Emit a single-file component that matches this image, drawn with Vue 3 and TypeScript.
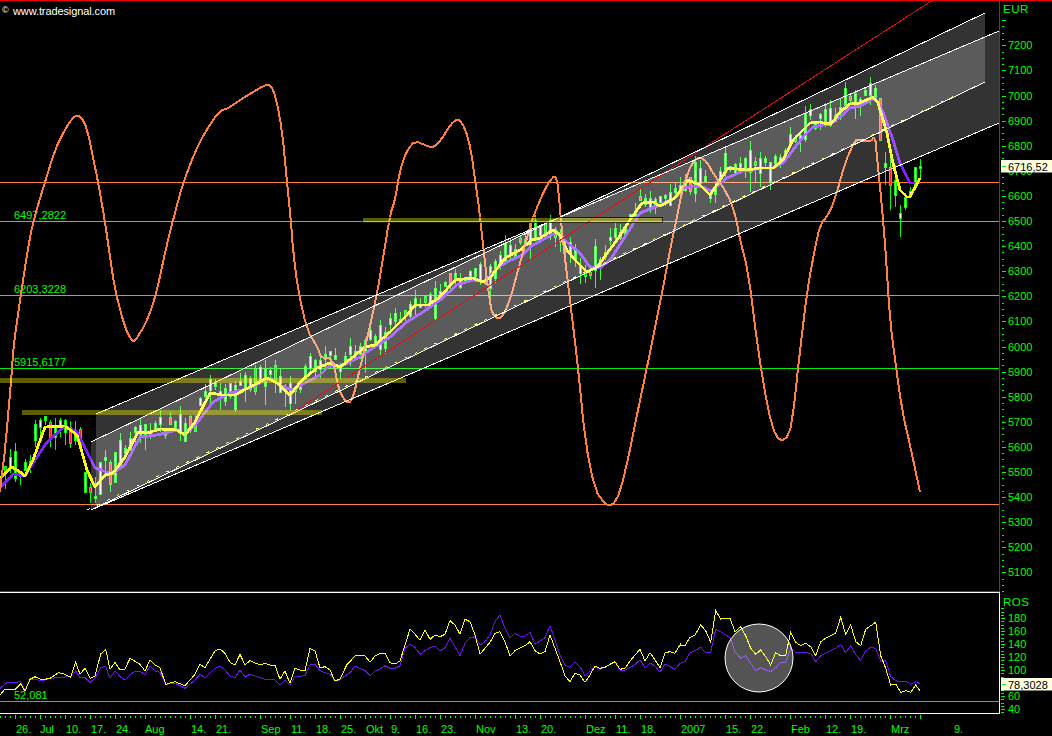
<script setup lang="ts">
type Pt = [number, number]

// points read off the chart, "x,y" pairs
const parse = (s: string): Pt[] =>
  s.trim().split(/\s+/).map(p => p.split(',').map(Number) as Pt)

// same, but measured in a 3x crop starting at x0,y0
const crop = (x0: number, y0: number, s: string): Pt[] =>
  parse(s).map(([a, b]) => [x0 + a / 3, y0 + b / 3] as Pt)

const line = (pts: Pt[]) => pts.map(([x, y]) => `${x.toFixed(1)},${y.toFixed(1)}`).join(' ')

// corner cutting, the oscillator is a smooth curve
const smooth = (pts: Pt[]): Pt[] => {
  const out: Pt[] = [pts[0]]
  for (let i = 0; i < pts.length - 1; i++) {
    const [ax, ay] = pts[i]
    const [bx, by] = pts[i + 1]
    out.push([ax * 0.75 + bx * 0.25, ay * 0.75 + by * 0.25], [ax * 0.25 + bx * 0.75, ay * 0.25 + by * 0.75])
  }
  out.push(pts[pts.length - 1])
  return out
}

const orangePts = parse(`0,492 2,473 5,450 12,370 13,350 20,300 28,248 33,222 45,182 55,150 63,133 73,117 80,115 87,128
  95,167 98,182 105,222 109,250 115,290 125,328 132,341 135,341 145,325 152,307 157,290 166,248 173,220 183,183 195,152
  205,132 220,110 227,109 240,100 253,92 265,85 271,85 276,98 282,130 287,182 291,222 293,250 298,290 307,330 318,348
  321,358 332,358 337,380 340,393 348,404 353,398 360,368 373,313 380,277 390,215 395,200 400,170 407,150 415,141
  425,145 433,148 441,140 450,125 458,118 465,128 471,150 475,180 478,200 480,217 490,307 495,318 502,318 510,300
  520,263 532,220 540,200 548,183 555,175 558,185 562,233 570,300 578,367 585,440 595,490 605,504 612,506 620,493
  630,450 640,400 647,367 662,293 672,240 677,217 683,187 692,162 700,157 707,162 713,173 727,193 735,213 740,240
  748,270 758,350 768,410 776,438 785,441 792,425 800,350 808,285 815,248 820,225 830,212 837,192 845,163 855,140
  860,140 870,142 875,136 877,157 880,187 883,220 886,257 890,320 895,360 902,410 910,445 920,492`)

const yellowPts = parse(`0,478 12,467 20,472 25,476 33,460 45,427 65,426 77,435 87,470 95,487 105,475 113,473 125,457
  138,432 147,433 160,429 177,430 185,435 195,422 210,393 223,395 235,395 248,388 267,378 277,383 290,395 302,380
  317,368 330,363 340,367 353,357 365,347 375,345 390,332 407,315 415,305 428,305 440,297 455,280 473,278 483,282
  490,278 505,258 520,250 532,240 540,238 553,230 560,235 567,250 575,260 587,272 597,267 617,240 630,220 642,203
  653,202 660,206 675,198 688,180 700,185 710,195 718,183 728,168 747,170 760,168 773,168 783,160 793,140 800,133
  810,123 820,122 827,124 832,123 840,112 850,104 860,103 873,97 878,103 887,133 893,163 900,190 907,197 910,197 920,178`)

const purplePts = parse(`0,488 13,474 25,476 35,460 47,442 65,426 77,432 95,468 112,474 125,465 140,437 157,435 177,430
  185,435 197,423 213,402 230,393 250,388 270,378 280,385 292,390 307,382 320,375 330,365 340,367 360,357 373,348
  390,337 407,322 423,312 440,300 457,285 473,280 485,282 497,268 507,262 522,255 533,245 557,232 570,245 580,253
  590,267 600,268 610,260 623,240 640,213 660,205 675,198 685,188 693,186 703,187 711,191 727,178 745,170 750,171
  760,168 773,168 783,163 793,150 803,137 813,127 823,125 830,124 840,117 850,108 860,106 875,98 883,112 893,140
  900,163 910,183 920,183`)

const rosYellow = [
  ...crop(0, 585, `0,330 15,312 45,313 62,297 75,318 90,283 105,275 125,285 150,280 175,263 195,268 212,277 227,232 240,268
    255,250 270,280 285,273 302,207 317,193 330,253 345,232 360,255 375,252 390,220 420,238 435,258 450,225 465,240 480,248
    497,298 525,290 555,302 585,268 600,238 615,248 645,197 660,192 675,205 690,232 705,240 720,208 735,240 750,227 780,240
    795,235 810,240 825,240 840,283 855,258 870,295 885,250 900,255 915,258 930,190 945,198 960,248 975,245 990,255
    1005,288 1020,282`),
  ...crop(340, 585, `0,283 20,240 45,213 75,212 90,232 105,213 120,205 135,205 150,233 165,237 180,228 195,180 210,133 225,148
    240,165 255,135 270,163 285,150 300,155 315,148 330,107 345,120 360,148 375,103 390,110 405,150 420,207 435,190 450,172
    465,145 480,140 495,170 510,213 525,197 555,182 570,170 585,197 600,207 615,200 630,150 645,190 660,230 675,272 690,290
    705,265 720,270 735,292 750,270 765,243 780,250 795,247 810,238 825,230 840,253 855,250 870,228 900,193 915,228 930,203
    945,225 960,248 975,203 990,200 1005,205 1020,180`),
  ...crop(680, 585, `0,182 15,182 30,157 45,150 62,120 77,137 92,172 107,77 122,102 150,100 165,140 182,125 197,152 212,190
    227,208 242,195 257,215 272,240 287,203 302,212 317,210 332,142 347,172 362,182 377,175 392,185 407,212 422,170 437,160
    467,145 482,97 497,148 512,120 527,170 542,182 557,133 572,122 587,112 602,212 617,250 632,300 647,297 662,322 677,317
    692,322 707,300 720,318`),
]

const rosPurple = [
  ...crop(0, 585, `0,310 20,293 35,293 62,290 75,315 90,283 105,282 125,288 150,280 175,278 195,276 212,275 227,258 240,278
    255,278 270,292 285,280 302,248 317,243 330,280 345,257 360,275 375,285 390,270 405,258 420,258 435,270 450,243 465,258
    480,262 497,298 525,295 555,310 585,285 600,268 615,278 645,250 660,243 675,255 690,273 705,278 720,255 735,275 750,268
    780,278 795,283 825,285 840,300 855,285 870,300 885,275 915,272 930,240 945,238 960,257 975,263 990,268 1005,288
    1020,285`),
  ...crop(340, 585, `0,283 30,263 45,243 75,257 90,272 105,258 120,252 135,242 150,250 165,250 180,242 195,190 210,178 225,187
    240,208 255,197 270,188 285,183 300,198 315,188 330,160 345,185 360,212 375,175 390,158 405,155 420,180 435,170 450,150
    465,110 480,90 495,130 510,160 525,145 540,153 555,153 570,142 585,178 600,168 615,158 630,122 645,165 660,210 675,240
    690,247 705,232 720,245 735,272 750,258 765,245 780,253 795,247 810,238 825,232 840,255 855,255 870,248 885,238 900,225
    915,248 930,235 945,242 960,262 975,237 990,245 1005,253 1020,235`),
  ...crop(680, 585, `0,235 15,230 30,203 45,197 62,187 77,203 92,202 107,133 122,140 150,158 165,200 182,220 197,212 212,235
    227,257 242,248 257,255 272,260 287,248 302,232 317,232 332,190 347,203 377,203 392,205 407,230 422,212 437,205 467,190
    482,178 497,203 512,183 527,208 542,227 557,197 572,187 587,190 602,228 617,227 632,275 647,287 662,290 677,288 692,298
    707,290 720,296`),
]

const yellowAt = (x: number) => {
  for (let i = 1; i < yellowPts.length; i++) {
    const [x0, y0] = yellowPts[i - 1]
    const [x1, y1] = yellowPts[i]
    if (x <= x1) return y0 + ((y1 - y0) * (x - x0)) / (x1 - x0)
  }
  return yellowPts[yellowPts.length - 1][1]
}

interface Candle { x: number; hi: number; lo: number; top: number; bot: number; down: boolean }

// bars that stick out enough to be worth placing by hand: x, hi, lo, top, bot, down
const fixedBars: [number, number, number, number, number, boolean][] = [
  [35, 420, 447, 424, 440, false], [40, 418, 442, 420, 427, false], [45, 416, 425, 416, 420, false],
  [50, 420, 447, 422, 437, true], [55, 418, 450, 425, 437, false], [60, 418, 437, 420, 427, false],
  [65, 419, 445, 420, 432, false], [70, 421, 448, 427, 443, true], [75, 421, 445, 432, 440, false],
  [85, 472, 492, 472, 492, false], [90, 483, 503, 487, 492, true], [95, 477, 503, 496, 498, false],
  [100, 462, 494, 462, 494, false], [105, 450, 470, 457, 460, false], [110, 460, 492, 462, 484, true],
  [115, 452, 482, 452, 482, false], [875, 85, 100, 88, 98, false], [880, 98, 141, 98, 140, true],
  [885, 152, 185, 163, 167, false], [890, 158, 210, 167, 185, true], [895, 165, 207, 180, 195, false],
  [900, 205, 237, 213, 218, false], [905, 193, 210, 197, 207, false], [910, 187, 197, 191, 195, false],
  [915, 167, 184, 167, 184, false], [920, 159, 180, 166, 168, false],
]

const candles: Candle[] = []
let seed = 4711
const rnd = () => {
  seed = (seed * 1103515 + 12345) % 2147483648
  return seed / 2147483648
}
for (let x = 5; x <= 920; x += 5) {
  const fixed = fixedBars.find(b => b[0] === x)
  if (fixed) {
    candles.push({ x, hi: fixed[1], lo: fixed[2], top: fixed[3], bot: fixed[4], down: fixed[5] })
    continue
  }
  const mid = yellowAt(x) - 7 + rnd() * 16 - 4
  const half = 1.5 + rnd() * rnd() * 15
  const top = mid - half
  const bot = mid + half
  candles.push({
    x, top, bot,
    hi: top - rnd() * 9,
    lo: bot + rnd() * rnd() * 22,
    down: rnd() < 0.16,
  })
}

const priceY = (p: number) => 95.5 + (7000 - p) * 0.251
const priceLabels: number[] = []
for (let p = 7200; p >= 5100; p -= 100) priceLabels.push(p)
const priceTicks: { y: number; major: boolean }[] = []
for (let p = 7300; p >= 5000; p -= 25) priceTicks.push({ y: Math.round(priceY(p)) + 0.5, major: p % 100 === 0 })

const rosY = (v: number) => 618 + (180 - v) * 0.65
const rosLabels = [180, 160, 140, 120, 100, 60, 40]
const rosTicks: { y: number; major: boolean }[] = []
for (let v = 195; v >= 35; v -= 5) rosTicks.push({ y: Math.round(rosY(v)) + 0.5, major: v % 20 === 0 })

const dateLabels: [string, number][] = [
  ['26.', 16], ['Jul', 40], ['10.', 66], ['17.', 91], ['24.', 116], ['Aug', 145], ['14.', 191], ['21.', 216],
  ['Sep', 261], ['11.', 291], ['18.', 316], ['25.', 341], ['Okt', 366], ['9.', 391], ['16.', 416], ['23.', 441],
  ['Nov', 476], ['13.', 516], ['20.', 541], ['Dez', 586], ['11.', 616], ['18.', 641], ['2007', 681], ['15.', 726],
  ['22.', 751], ['Feb', 791], ['12.', 826], ['19.', 851], ['Mrz', 891], ['9.', 954],
]
const majorX = [15, 40, 65, 90, 115, 145, 190, 215, 260, 290, 315, 340, 365, 390, 415, 440, 475, 515, 540, 585,
  615, 640, 680, 725, 750, 790, 825, 850, 890, 920]
const dateTicks: { x: number; major: boolean }[] = []
for (let x = 0; x <= 920; x += 5) dateTicks.push({ x: x + 0.5, major: majorX.includes(x) })

const orange = line(smooth(orangePts))
const yellow = line(yellowPts)
const purple = line(purplePts)
const rosY1 = line(rosYellow)
const rosP1 = line(rosPurple)
</script>

<template>
  <div class="chart">
    <svg class="pane" width="1052" height="592" viewBox="0 0 1052 592">
      <text class="lbl" x="14" y="219">6497,2822</text>
      <text class="lbl" x="14" y="293">6203,3228</text>
      <text class="lbl" x="14" y="366">5915,6177</text>

      <!-- horizontal levels -->
      <line class="lv-orange" x1="0" x2="999" y1="182.5" y2="182.5" />
      <line class="lv-green" x1="0" x2="999" y1="221.5" y2="221.5" />
      <line class="lv-green" x1="0" x2="999" y1="295.5" y2="295.5" />
      <line class="lv-bright" x1="0" x2="999" y1="368.5" y2="368.5" />
      <line class="lv-orange" x1="0" x2="999" y1="504.5" y2="504.5" />

      <!-- candles -->
      <g v-for="c in candles" :key="c.x">
        <line class="wick" :x1="c.x + 0.5" :x2="c.x + 0.5" :y1="c.hi" :y2="c.lo" />
        <rect :class="c.down ? 'body-down' : 'body-up'" :x="c.x - 0.5" :y="c.top" width="2" :height="c.bot - c.top" />
      </g>

      <polyline class="ma ma-purple" :points="purple" />
      <polyline class="ma ma-yellow" :points="yellow" />
      <polyline class="ma ma-orange" :points="orange" />

      <!-- two channels, lighter where they overlap -->
      <polygon class="band" points="96,414 999,31 999,123 96,508" />
      <polygon class="band" points="91,442 985,13 985,82 91,510" />

      <line class="trend" x1="292" y1="413" x2="933" y2="0" />
      <line class="edge" x1="96" y1="414" x2="999" y2="31" />
      <line class="edge" x1="91" y1="442" x2="985" y2="13" />
      <line class="edge" x1="91" y1="510" x2="985" y2="82" />
      <line class="edge" x1="91" y1="510" x2="999" y2="123" />
      <line class="dots" x1="87" y1="510" x2="958" y2="94" />

      <rect class="zone zone-edged" x="362.5" y="217.5" width="300" height="5" />
      <rect class="zone" x="0" y="378" width="406" height="5" />
      <rect class="zone" x="22" y="410" width="300" height="5" />

      <line class="frame-red" x1="0" x2="1052" y1="0.5" y2="0.5" />
      <line class="frame-red" x1="999.5" x2="999.5" y1="0" y2="592" />
      <line class="frame-red" x1="0" x2="1000" y1="591.5" y2="591.5" />

      <text class="brand-c" x="2" y="13">©</text>
      <text class="brand" x="13" y="15">www.tradesignal.com</text>

      <!-- price axis -->
      <text class="axis-title" x="1003" y="13">EUR</text>
      <line v-for="t in priceTicks" :key="t.y" class="tick" x1="1002" :x2="t.major ? 1006 : 1004" :y1="t.y" :y2="t.y" />
      <text v-for="p in priceLabels" :key="p" class="lbl" x="1008" :y="priceY(p) + 4">{{ p }}</text>
      <rect class="tag" x="1001" y="160" width="51" height="12.5" />
      <line class="tick" x1="1002" x2="1006" y1="166.5" y2="166.5" />
      <text class="tag-text" x="1008" y="171">6716,52</text>
    </svg>

    <svg class="pane" width="1052" height="144" viewBox="0 592 1052 144">
      <text class="lbl" x="14" y="699">52,081</text>
      <line class="lv-bright" x1="0" x2="999" y1="701.5" y2="701.5" />
      <polyline class="ros ros-purple" :points="rosP1" />
      <polyline class="ros ros-yellow" :points="rosY1" />
      <circle class="spot" cx="759" cy="658" r="34" />

      <polyline class="frame-white" points="0,592.5 999.5,592.5 999.5,713.5 0,713.5" />

      <text class="axis-title" x="1003" y="606">ROS</text>
      <line v-for="t in rosTicks" :key="t.y" class="tick" x1="1001" :x2="t.major ? 1005 : 1004" :y1="t.y" :y2="t.y" />
      <text v-for="v in rosLabels" :key="v" class="lbl" x="1008" :y="rosY(v) + 4">{{ v }}</text>
      <rect class="tag" x="1001" y="678" width="51" height="12.5" />
      <line class="tick" x1="1002" x2="1006" y1="684.5" y2="684.5" />
      <text class="tag-text" x="1008" y="688.5">78,3028</text>

      <line v-for="t in dateTicks" :key="t.x" class="tick" :x1="t.x" :x2="t.x" :y1="t.major ? 715 : 716" :y2="t.major ? 719 : 718" />
      <text v-for="[name, x] in dateLabels" :key="name + x" class="lbl" :x="x" y="733">{{ name }}</text>
    </svg>
  </div>
</template>

<style scoped>
.chart {
  display: flex;
  flex-direction: column;
  width: 1052px;
  height: 736px;
  background: #000;
  overflow: hidden;
}
.pane { display: block; flex: none; }

/* ── levels ──────────────────────────────── */
.lv-orange { stroke: #ff8040; stroke-width: 1; shape-rendering: crispEdges; }
.lv-green  { stroke: #2ee82e; stroke-width: 1; shape-rendering: crispEdges; }
.lv-bright { stroke: #00f000; stroke-width: 1; shape-rendering: crispEdges; }

/* ── candles ─────────────────────────────── */
.wick { stroke: #00ff00; stroke-width: 1; shape-rendering: crispEdges; }
.body-up   { fill: #fff; stroke: #00ff00; stroke-width: 1; shape-rendering: crispEdges; }
.body-down { fill: #ff2020; stroke: #00ff00; stroke-width: 1; shape-rendering: crispEdges; }

/* ── indicator lines ─────────────────────── */
.ma { fill: none; stroke-linejoin: round; shape-rendering: crispEdges; }
.ma-purple { stroke: #8020ff; stroke-width: 2.8; }
.ma-yellow { stroke: #ffff00; stroke-width: 2.8; }
.ma-orange { stroke: #ff8040; stroke-width: 2; }

.band  { fill: rgba(255, 255, 255, 0.2); }
.trend { stroke: #e01010; stroke-width: 1; shape-rendering: crispEdges; }
.edge  { stroke: #fff; stroke-width: 1; shape-rendering: crispEdges; }
.dots  { stroke: #ffff60; stroke-width: 1; stroke-dasharray: 3 8; shape-rendering: crispEdges; }
.zone  { fill: rgba(255, 255, 0, 0.36); shape-rendering: crispEdges; }
.zone-edged { stroke: rgba(0, 0, 0, 0.7); stroke-width: 1; }

.frame-red   { stroke: #f00000; stroke-width: 1; shape-rendering: crispEdges; }
.frame-white { fill: none; stroke: #fff; stroke-width: 1; shape-rendering: crispEdges; }

/* ── lower pane ──────────────────────────── */
.ros { fill: none; stroke-width: 1; shape-rendering: crispEdges; }
.ros-purple { stroke: #7010f0; }
.ros-yellow { stroke: #ffff00; }
.spot { fill: rgba(255, 255, 255, 0.33); stroke: #fff; stroke-width: 1; }

/* ── text and axes ───────────────────────── */
.tick { stroke: #00ff00; stroke-width: 1; shape-rendering: crispEdges; }
text { font-family: "Liberation Sans", Arial, sans-serif; }
.lbl { fill: #00ff00; font-size: 11px; }
.axis-title { fill: #00ff00; font-size: 11.5px; letter-spacing: 0.5px; }
.brand { fill: #fff; font-size: 11px; letter-spacing: -0.1px; }
.brand-c { fill: #fff; font-size: 9px; }
.tag { fill: #ffffe0; }
.tag-text { fill: #000; font-size: 11px; }
</style>

<style>
html, body { margin: 0; background: #000; }
</style>
